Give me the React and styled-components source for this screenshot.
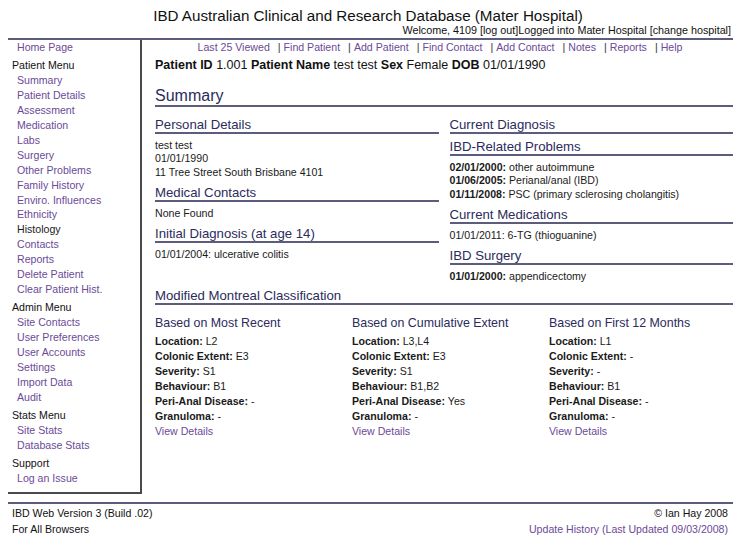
import React from "react";
import styled, { createGlobalStyle } from "styled-components";

const GlobalStyle = createGlobalStyle`
  body {
    margin: 8px;
    background: #ffffff;
    font-family: "Liberation Sans", Arial, Helvetica, sans-serif;
    font-size: 10.6px;
    color: #1a1a1a;
  }
  * { box-sizing: border-box; }
`;

const LINK = "#6b4a98";
const NAVY = "#2b2b5c";
const RULE = "#5c5c7c";

const Header = styled.div`
  border-bottom: 2px solid ${RULE};
`;

const Title = styled.h1`
  margin: 0;
  padding-right: 5px;
  font-size: 15.2px;
  line-height: 15px;
  font-weight: normal;
  text-align: center;
  color: #111;
`;

const Welcome = styled.div`
  text-align: right;
  font-size: 10.75px;
  line-height: 15px;
  padding-right: 2px;
  color: #111;
`;

const Body = styled.div`
  display: flex;
  align-items: flex-start;
`;

const Sidebar = styled.div`
  width: 134px;
  flex-shrink: 0;
  border-right: 2px solid #4a4a4a;
  border-bottom: 2px solid #4a4a4a;
  padding-bottom: 6px;
`;

const MenuGroup = styled.div`
  margin-top: ${(p) => (p.$first ? "0" : "3.5px")};
`;

const MenuLabel = styled.div`
  padding-left: 4px;
  line-height: 14.9px;
  color: #111;
`;

const MenuItem = styled.a`
  display: block;
  padding-left: 9px;
  line-height: 14.9px;
  color: ${(p) => (p.$plain ? "#1a1a1a" : LINK)};
  text-decoration: none;
  cursor: pointer;
`;

const Main = styled.div`
  flex: 1;
  padding-left: 13px;
`;

const TopNav = styled.div`
  text-align: center;
  line-height: 15px;
  padding-right: 8px;
`;

const NavLink = styled.a`
  color: ${LINK};
  text-decoration: none;
  cursor: pointer;
`;

const Sep = styled.span`
  color: #333;
  margin: 0 3px 0 8px;
`;

const PatientBar = styled.div`
  margin-top: 3px;
  font-size: 12.5px;
  line-height: 15px;
  color: #111;
  b { font-weight: bold; }
`;

const PageTitle = styled.h2`
  margin: 14px 0 0;
  font-size: 16px;
  line-height: 18px;
  font-weight: normal;
  color: ${NAVY};
  border-bottom: 2px solid ${RULE};
`;

const Columns = styled.div`
  display: grid;
  grid-template-columns: 1fr 1fr;
  column-gap: 11px;
  margin-top: 10px;
  align-items: start;
`;

const Section = styled.h3`
  margin: ${(p) => p.$top ?? 6}px 0 0;
  font-size: 13.2px;
  line-height: 15px;
  font-weight: normal;
  color: ${NAVY};
  border-bottom: 2px solid ${RULE};
`;

const Text = styled.div`
  margin-top: 5px;
  line-height: 13.3px;
  color: #1a1a1a;
  b { font-weight: bold; }
`;

const Montreal = styled.div`
  display: grid;
  grid-template-columns: 197px 197px 1fr;
  margin-top: 11px;
`;

const MonCol = styled.div``;

const MonTitle = styled.div`
  font-size: 12.4px;
  line-height: 14px;
  color: ${NAVY};
`;

const MonList = styled.div`
  margin-top: 4px;
  line-height: 15px;
  b { font-weight: bold; }
`;

const Footer = styled.div`
  margin-top: 8px;
  border-top: 2px solid ${RULE};
  display: flex;
  justify-content: space-between;
  line-height: 15.5px;
  padding: 2px 5px 0 4px;
  color: #111;
`;

const FootRight = styled.div`
  text-align: right;
`;

const menu = [
  { label: null, items: ["Home Page"] },
  {
    label: "Patient Menu",
    items: [
      "Summary",
      "Patient Details",
      "Assessment",
      "Medication",
      "Labs",
      "Surgery",
      "Other Problems",
      "Family History",
      "Enviro. Influences",
      "Ethnicity",
      "Histology",
      "Contacts",
      "Reports",
      "Delete Patient",
      "Clear Patient Hist.",
    ],
  },
  {
    label: "Admin Menu",
    items: [
      "Site Contacts",
      "User Preferences",
      "User Accounts",
      "Settings",
      "Import Data",
      "Audit",
    ],
  },
  { label: "Stats Menu", items: ["Site Stats", "Database Stats"] },
  { label: "Support", items: ["Log an Issue"] },
];

const navLinks = [
  "Last 25 Viewed",
  "Find Patient",
  "Add Patient",
  "Find Contact",
  "Add Contact",
  "Notes",
  "Reports",
  "Help",
];

const montreal = [
  {
    title: "Based on Most Recent",
    rows: [
      ["Location", "L2"],
      ["Colonic Extent", "E3"],
      ["Severity", "S1"],
      ["Behaviour", "B1"],
      ["Peri-Anal Disease", "-"],
      ["Granuloma", "-"],
    ],
  },
  {
    title: "Based on Cumulative Extent",
    rows: [
      ["Location", "L3,L4"],
      ["Colonic Extent", "E3"],
      ["Severity", "S1"],
      ["Behaviour", "B1,B2"],
      ["Peri-Anal Disease", "Yes"],
      ["Granuloma", "-"],
    ],
  },
  {
    title: "Based on First 12 Months",
    rows: [
      ["Location", "L1"],
      ["Colonic Extent", "-"],
      ["Severity", "-"],
      ["Behaviour", "B1"],
      ["Peri-Anal Disease", "-"],
      ["Granuloma", "-"],
    ],
  },
];

const App = () => {
  return (
    <>
      <GlobalStyle />
      <Header>
        <Title>IBD Australian Clinical and Research Database (Mater Hospital)</Title>
        <Welcome>
          Welcome, 4109 [log out]Logged into Mater Hospital [change hospital]
        </Welcome>
      </Header>
      <Body>
        <Sidebar>
          {menu.map((group, i) => (
            <MenuGroup key={i} $first={i === 0}>
              {group.label && <MenuLabel>{group.label}</MenuLabel>}
              {group.items.map((item) => (
                <MenuItem key={item} $plain={item === "Histology"}>
                  {item}
                </MenuItem>
              ))}
            </MenuGroup>
          ))}
        </Sidebar>
        <Main>
          <TopNav>
            {navLinks.map((l, i) => (
              <React.Fragment key={l}>
                {i > 0 && <Sep>|</Sep>}
                <NavLink>{l}</NavLink>
              </React.Fragment>
            ))}
          </TopNav>
          <PatientBar>
            <b>Patient ID</b> 1.001 <b>Patient Name</b> test test <b>Sex</b> Female{" "}
            <b>DOB</b> 01/01/1990
          </PatientBar>
          <PageTitle>Summary</PageTitle>
          <Columns>
            <div>
              <Section $top={0}>Personal Details</Section>
              <Text>
                test test
                <br />
                01/01/1990
                <br />
                11 Tree Street South Brisbane 4101
              </Text>
              <Section>Medical Contacts</Section>
              <Text>None Found</Text>
              <Section>Initial Diagnosis (at age 14)</Section>
              <Text>01/01/2004: ulcerative colitis</Text>
            </div>
            <div>
              <Section $top={0}>Current Diagnosis</Section>
              <Section $top={5}>IBD-Related Problems</Section>
              <Text>
                <b>02/01/2000:</b> other autoimmune
                <br />
                <b>01/06/2005:</b> Perianal/anal (IBD)
                <br />
                <b>01/11/2008:</b> PSC (primary sclerosing cholangitis)
              </Text>
              <Section>Current Medications</Section>
              <Text>01/01/2011: 6-TG (thioguanine)</Text>
              <Section>IBD Surgery</Section>
              <Text>
                <b>01/01/2000:</b> appendicectomy
              </Text>
            </div>
          </Columns>
          <Section $top={5}>Modified Montreal Classification</Section>
          <Montreal>
            {montreal.map((col) => (
              <MonCol key={col.title}>
                <MonTitle>{col.title}</MonTitle>
                <MonList>
                  {col.rows.map(([k, v]) => (
                    <div key={k}>
                      <b>{k}:</b> {v}
                    </div>
                  ))}
                  <NavLink>View Details</NavLink>
                </MonList>
              </MonCol>
            ))}
          </Montreal>
        </Main>
      </Body>
      <Footer>
        <div>
          IBD Web Version 3 (Build .02)
          <br />
          For All Browsers
        </div>
        <FootRight>
          © Ian Hay 2008
          <br />
          <NavLink>Update History (Last Updated 09/03/2008)</NavLink>
        </FootRight>
      </Footer>
    </>
  );
};

export default App;
